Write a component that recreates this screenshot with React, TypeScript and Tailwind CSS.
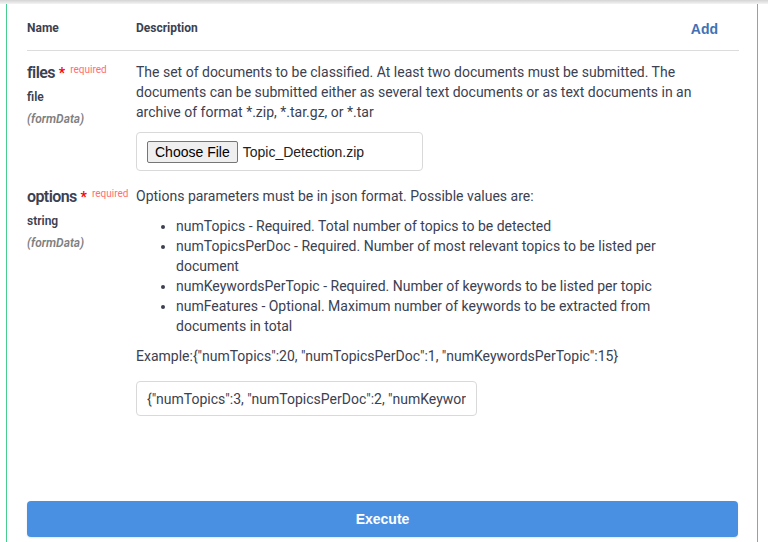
const sans = "font-['Roboto',sans-serif]";
const arial = "font-['Liberation_Sans',Arial,sans-serif]";

const ParamName = ({ name, type }: { name: string; type: string }) => (
  <div className="w-[109px] shrink-0 text-[#3b4151]">
    <div className="flex items-start leading-[22px] whitespace-nowrap">
      <span className="text-[16px] font-semibold tracking-[-0.6px]">{name}</span>
      <span className="ml-[4px] text-[14px] font-bold text-[#ff0000]">*</span>
      <span className="ml-[5px] -mt-[3px] text-[10px] text-[#ff6f6f]">required</span>
    </div>
    <div className="mt-[3px] text-[12px] font-semibold leading-[20px]">{type}</div>
    <div className="mt-[2px] text-[12px] italic font-semibold leading-[20px] text-[#808080]">
      (formData)
    </div>
  </div>
);

export default function App() {
  return (
    <div className={`w-[768px] h-[542px] overflow-hidden bg-white ${sans}`}>
      <div className="h-[4px] bg-gradient-to-b from-[#d4d4d4] to-[#f4f4f4]" />
      <div className="ml-[6px] mr-[10px] h-[538px] border-x-[1.5px] border-[#49cc90] pl-[20px] pr-[18px]">
        <div className="flex items-center h-[47px] border-b border-[#dcdcdc] pt-[1px] text-[12px] font-bold text-[#3b4151]">
          <div className="w-[109px]">Name</div>
          <div className="flex-1">Description</div>
          <div className={`mr-[21px] mt-[3px] text-[14px] font-bold text-[#3f72b4] ${arial}`}>Add</div>
        </div>

        <div className="flex pt-[11px]">
          <ParamName name="files" type="file" />
          <div className="flex-1 text-[14px] leading-[20px] text-[#3b4151]">
            <p className="pr-[40px]">
              The set of documents to be classified. At least two documents must be submitted. The
              documents can be submitted either as several text documents or as text documents in an
              archive of format *.zip, *.tar.gz, or *.tar
            </p>
            <div className="mt-[10px] flex items-center w-[287px] h-[39px] border border-[#d9d9d9] rounded-[4px] pl-[10px]">
              <div className={`flex items-center h-[22px] px-[7px] border border-[#767676] rounded-[2px] bg-[#efefef] text-[14px] text-black ${arial}`}>
                Choose File
              </div>
              <span className={`ml-[5px] text-[14px] text-[#222] ${arial}`}>Topic_Detection.zip</span>
            </div>
          </div>
        </div>

        <div className="flex pt-[15px]">
          <ParamName name="options" type="string" />
          <div className="flex-1 text-[14px] leading-[20px] text-[#3b4151]">
            <p>Options parameters must be in json format. Possible values are:</p>
            <ul className="mt-[10px] pl-[40px] list-disc pr-[82px]">
              <li>numTopics - Required. Total number of topics to be detected</li>
              <li>numTopicsPerDoc - Required. Number of most relevant topics to be listed per document</li>
              <li>numKeywordsPerTopic - Required. Number of keywords to be listed per topic</li>
              <li>numFeatures - Optional. Maximum number of keywords to be extracted from documents in total</li>
            </ul>
            <p className="mt-[10px]">
              Example:{'{"numTopics":20, "numTopicsPerDoc":1, "numKeywordsPerTopic":15}'}
            </p>
            <input
              readOnly
              value={'{"numTopics":3, "numTopicsPerDoc":2, "numKeywordsPerTopic":10}'}
              className="mt-[15px] block w-[341px] h-[35px] border border-[#d9d9d9] rounded-[4px] px-[10px] text-[14px] text-[#3b4151] outline-none"
            />
          </div>
        </div>

        <button
          className={`mt-[85px] w-[711px] h-[36px] rounded-[4px] bg-[#4990e2] text-white text-[14px] font-bold shadow-[0_1px_2px_rgba(0,0,0,0.1)] ${arial}`}
        >
          Execute
        </button>
      </div>
    </div>
  );
}
